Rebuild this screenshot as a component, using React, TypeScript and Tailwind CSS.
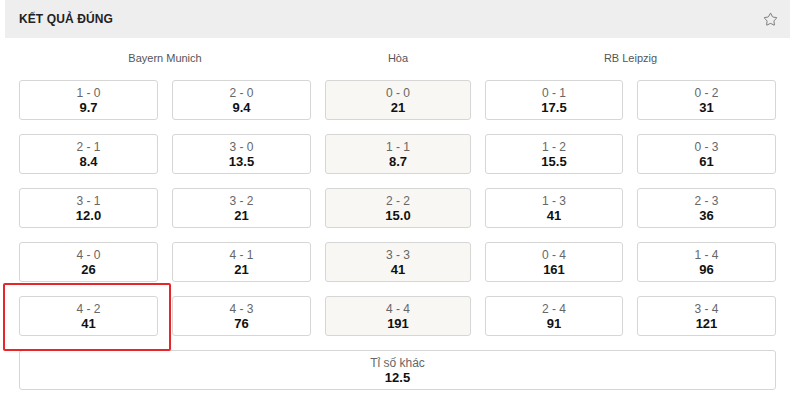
import React from "react";
import { Star } from "lucide-react";

type Cell = { s: string; v: string; mid?: boolean };

const rows: Cell[][] = [
  [{ s: "1 - 0", v: "9.7" }, { s: "2 - 0", v: "9.4" }, { s: "0 - 0", v: "21", mid: true }, { s: "0 - 1", v: "17.5" }, { s: "0 - 2", v: "31" }],
  [{ s: "2 - 1", v: "8.4" }, { s: "3 - 0", v: "13.5" }, { s: "1 - 1", v: "8.7", mid: true }, { s: "1 - 2", v: "15.5" }, { s: "0 - 3", v: "61" }],
  [{ s: "3 - 1", v: "12.0" }, { s: "3 - 2", v: "21" }, { s: "2 - 2", v: "15.0", mid: true }, { s: "1 - 3", v: "41" }, { s: "2 - 3", v: "36" }],
  [{ s: "4 - 0", v: "26" }, { s: "4 - 1", v: "21" }, { s: "3 - 3", v: "41", mid: true }, { s: "0 - 4", v: "161" }, { s: "1 - 4", v: "96" }],
  [{ s: "4 - 2", v: "41" }, { s: "4 - 3", v: "76" }, { s: "4 - 4", v: "191", mid: true }, { s: "2 - 4", v: "91" }, { s: "3 - 4", v: "121" }],
];

function Box({ c }: { c: Cell }) {
  return (
    <div
      className={`h-[40px] rounded-[3px] border border-[#d6d6d6] flex flex-col items-center justify-center ${
        c.mid ? "bg-[#f8f7f3]" : "bg-white"
      }`}
    >
      <div className="text-[12px] leading-[14px] text-[#666]">{c.s}</div>
      <div className="text-[13px] leading-[15px] font-bold text-[#111]">{c.v}</div>
    </div>
  );
}

export default function App() {
  return (
    <div
      className="w-[800px] h-[400px] bg-white overflow-hidden"
      style={{ fontFamily: '"Liberation Sans", Arial, sans-serif' }}
    >
      <div className="ml-[5px] w-[785px]">
        <div className="h-[38px] bg-[#eeeeee] flex items-center justify-between pl-[14px] pr-[12px]">
          <div className="text-[12px] font-bold text-[#222] tracking-[0.1px]">KẾT QUẢ ĐÚNG</div>
          <Star size={15} strokeWidth={1.2} className="text-[#555]" />
        </div>
        <div className="relative pl-[14px] pt-[13px]">
          <div className="grid grid-cols-[139px_139px_146px_138px_139px] gap-x-[14px] gap-y-[14px] w-[758px]">
            <div className="col-span-2 text-center text-[11px] text-[#555] h-[15px] leading-[15px]">Bayern Munich</div>
            <div className="text-center text-[11px] text-[#555] h-[15px] leading-[15px]">Hòa</div>
            <div className="col-span-2 text-center text-[11px] text-[#555] h-[15px] leading-[15px]">RB Leipzig</div>
            {rows.flat().map((c, i) => (
              <Box key={i} c={c} />
            ))}
            <div className="col-span-5 h-[40px] rounded-[3px] border border-[#d6d6d6] bg-white flex flex-col items-center justify-center">
              <div className="text-[12px] leading-[14px] text-[#666]">Tỉ số khác</div>
              <div className="text-[13px] leading-[15px] font-bold text-[#111]">12.5</div>
            </div>
          </div>
          <div className="absolute left-[-2px] top-[245px] w-[168px] h-[68px] border-2 border-[#e8262a] rounded-[2px] pointer-events-none" />
        </div>
      </div>
    </div>
  );
}
